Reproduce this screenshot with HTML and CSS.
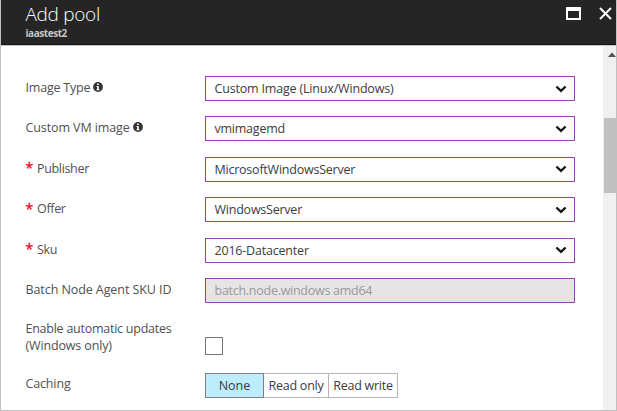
FILE: index.html
```html
<!DOCTYPE html>
<html lang="en">
<head>
<meta charset="utf-8">
<title>Add pool</title>
<link rel="stylesheet" href="styles.css">
</head>
<body>
<svg width="0" height="0" class="defs">
  <symbol id="chev" viewBox="0 0 12 8"><path d="M1.4 1.5 L6 5.9 L10.6 1.5" fill="none" stroke="#111" stroke-width="2.3"/></symbol>
  <symbol id="info" viewBox="0 0 10 10"><circle cx="5" cy="5" r="4.9" fill="#333"/><path d="M4.1 1.6h1.7v1.5H4.1zM3.5 4h2.3v3.2h.7v1H3.5v-1h.7V5h-.7z" fill="#fff"/></symbol>
</svg>
<div class="blade">
  <header class="header">
    <div class="titles">
      <h1 class="title">Add pool</h1>
      <div class="subtitle">iaastest2</div>
    </div>
    <div class="actions">
      <svg width="15" height="13" viewBox="0 0 15 13"><path d="M0 0h15v13H0zM2 4v7h11V4z" fill="#fff" fill-rule="evenodd"/></svg>
      <svg width="13" height="13" viewBox="0 0 13 13"><path d="M1 1 L12 12 M12 1 L1 12" stroke="#fff" stroke-width="2"/></svg>
    </div>
  </header>
  <div class="body">
    <main class="form">
      <div class="row"><div class="label"><span class="t-type">Image Type</span><svg class="info"><use href="#info"/></svg></div><div class="field"><span class="v-custom">Custom Image (Linux/Windows)</span><svg class="chev"><use href="#chev"/></svg></div></div>
      <div class="row"><div class="label"><span class="t-vm">Custom VM image</span><svg class="info"><use href="#info"/></svg></div><div class="field"><span class="v-vm">vmimagemd</span><svg class="chev"><use href="#chev"/></svg></div></div>
      <div class="row"><div class="label"><b class="star">*</b><span class="t-pub">Publisher</span></div><div class="field"><span class="v-pub">MicrosoftWindowsServer</span><svg class="chev"><use href="#chev"/></svg></div></div>
      <div class="row"><div class="label"><b class="star">*</b><span class="t-offer">Offer</span></div><div class="field"><span class="v-offer">WindowsServer</span><svg class="chev"><use href="#chev"/></svg></div></div>
      <div class="row"><div class="label"><b class="star">*</b><span class="t-sku">Sku</span></div><div class="field"><span class="v-sku">2016-Datacenter</span><svg class="chev"><use href="#chev"/></svg></div></div>
      <div class="row"><div class="label"><span class="t-batch">Batch Node Agent SKU ID</span></div><div class="field disabled"><span class="v-batch">batch.node.windows amd64</span></div></div>
      <div class="row updates"><div class="label two"><span class="t-en">Enable automatic updates</span><span class="t-win">(Windows only)</span></div><div class="check"></div></div>
      <div class="row caching"><div class="label"><span class="t-cache">Caching</span></div>
        <div class="options"><div class="opt on"><span>None</span></div><div class="opt ro"><span>Read only</span></div><div class="opt rw"><span>Read write</span></div></div>
      </div>
    </main>
    <div class="scroll"><svg class="up" width="8" height="5" viewBox="0 0 8 5"><path d="M0 5 L4 0.5 L8 5z" fill="#505050"/></svg><div class="thumb"></div></div>
  </div>
</div>
</body>
</html>
```

FILE: styles.css
```css
* { box-sizing: border-box; }
body { margin: 0; font-family: "Open Sans", "Noto Sans", sans-serif; font-size: 12.5px; color: #505050; background: #fff; }
.defs { display: block; height: 0; }
.blade { width: 617px; height: 411px; overflow: hidden; border: solid #c0c0c0; border-width: 0 1px 1px; display: flex; flex-direction: column; }
.header { height: 45px; flex: none; background: #252525; border-bottom: 1px solid #151515; display: flex; justify-content: space-between; padding-left: 24.5px; }
.titles { padding-top: 3px; }
.title { margin: 0; font-size: 19px; line-height: 23px; font-weight: 300; letter-spacing: -.3px; color: #fff; white-space: nowrap; }
.subtitle { font-size: 10px; line-height: 14px; font-weight: 700; letter-spacing: -.45px; color: #c4c4c4; }
.actions { display: flex; gap: 18px; padding: 7px 4px 0 0; }
.body { flex: 1; display: flex; justify-content: space-between; border-top: 1px solid #c8c8c8; min-height: 0; }
.form { width: 574px; padding: 30px 0 0 24.5px; }
.row { display: grid; grid-template-columns: 179.5px 370px; height: 40.4px; align-items: start; white-space: nowrap; }
.label { display: flex; align-items: center; height: 23px; }
.caching .label { height: 21px; }
.label span, .field span { display: block; }
.t-type { letter-spacing: -.2px; }
.t-vm { letter-spacing: -.1px; }
.t-pub, .t-offer, .t-sku { letter-spacing: -.33px; }
.t-batch { letter-spacing: -.08px; }
.t-en { letter-spacing: -.25px; }
.t-win, .t-cache { letter-spacing: -.15px; }
.v-custom { letter-spacing: -.18px; }
.v-vm, .v-pub, .v-offer { letter-spacing: -.23px; }
.v-sku { letter-spacing: -.2px; }
.v-batch { letter-spacing: -.27px; }
.info { width: 10px; height: 10px; margin: -1px 0 0 3px; }
.star { color: #f00018; font-size: 14px; font-weight: 400; width: 11.5px; line-height: 14px; -webkit-text-stroke: .3px #f00018; }
.field { height: 25px; border: 1px solid #9a3fb0; display: flex; align-items: center; justify-content: space-between; padding: 0 7.5px 0 8.5px; color: #3c3c3c; }
.chev { width: 12px; height: 8px; }
.disabled { background: #e5e5e5; color: #999; }
.updates { height: 54.6px; }
.label.two { display: block; height: 34px; line-height: 17px; margin-top: 2px; }
.check { width: 18px; height: 18px; border: 1px solid #777; margin-top: 18.5px; }
.options { display: flex; color: #3c3c3c; }
.opt { height: 25px; border: 1px solid #b5b5b5; border-left: 0; display: flex; align-items: center; justify-content: center; letter-spacing: -.25px; }
.opt.on { width: 59px; border: 1px solid #808080; background: #bdedfb; letter-spacing: 0; }
.ro { width: 65px; }
.rw { width: 69px; }
.scroll { width: 13px; background: #f0f0f0; display: flex; flex-direction: column; align-items: flex-end; }
.up { margin-top: 6px; }
.thumb { width: 12px; height: 75px; margin-top: 61px; background: #c0c0c0; }
```
